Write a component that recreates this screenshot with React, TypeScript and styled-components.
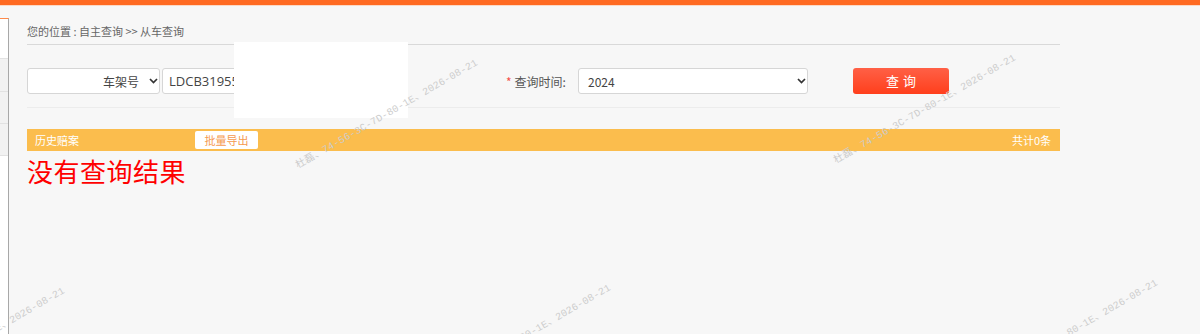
import React from "react";
import styled, { createGlobalStyle } from "styled-components";

const GlobalStyle = createGlobalStyle`
  html, body { margin: 0; padding: 0; }
  body {
    background: #f7f7f7;
    font-family: "Noto Sans CJK SC", "Noto Sans", sans-serif;
    overflow: hidden;
  }
`;

const Page = styled.div`
  position: relative;
  width: 1200px;
  height: 334px;
  overflow: hidden;
  background: #f7f7f7;
`;

const TopBar = styled.div`
  height: 5px;
  background: #ff6a22;
  border-bottom: 1px solid #fbd9c6;
`;

const Layout = styled.div`
  display: flex;
  padding-top: 12px;
  height: 316px;
`;

const Sidebar = styled.div`
  width: 8px;
  flex: none;
  background: #fff;
  border-top: 1px solid #ff8a4a;
  border-right: 1px solid #a8a8a8;
  display: flex;
  flex-direction: column;
`;

const SideItem = styled.div<{ $h: number; $shade?: boolean }>`
  height: ${(p) => p.$h}px;
  background: ${(p) => (p.$shade ? "#f2f2f2" : "#fff")};
  border-bottom: 1px solid #e2e2e2;
`;

const Main = styled.div`
  width: 1033px;
  padding-left: 18px;
  padding-top: 3px;
`;

const Breadcrumb = styled.div`
  font-size: 11px;
  line-height: 20px;
  color: #666;
  padding-bottom: 3px;
  border-bottom: 1px solid #d9d9d9;
`;

const FormRow = styled.div`
  display: flex;
  align-items: center;
  margin-top: 23px;
  padding-bottom: 13px;
  border-bottom: 1px solid #ececec;
`;

const SelectBox = styled.div<{ $w: number; $right?: boolean }>`
  box-sizing: border-box;
  width: ${(p) => p.$w}px;
  height: 26px;
  background: #fff;
  border: 1px solid #d6d6d6;
  border-radius: 3px;
  display: flex;
  align-items: center;
  justify-content: ${(p) => (p.$right ? "flex-end" : "space-between")};
  padding: 0 1px 0 9px;
  font-size: 12px;
  color: #444;
  gap: 10px;
`;

const TextInput = styled.div`
  box-sizing: border-box;
  width: 200px;
  height: 26px;
  margin-left: 2px;
  background: #fff;
  border: 1px solid #d6d6d6;
  border-radius: 3px;
  display: flex;
  align-items: center;
  padding-left: 6px;
  font-size: 13px;
  color: #444;
  font-family: "Open Sans", "Noto Sans", sans-serif;
`;

const Label = styled.div`
  margin-left: 144px;
  width: 72px;
  font-size: 12px;
  color: #555;
  display: flex;
  align-items: center;
`;

const Star = styled.span`
  color: #f5504a;
  margin-right: 3px;
  font-size: 12px;
`;

const SearchButton = styled.button`
  margin-left: 45px;
  width: 96px;
  height: 26px;
  border: none;
  border-radius: 3px;
  background: linear-gradient(#ff6046, #ff3f1c);
  color: #fff;
  font-family: "Noto Sans CJK SC", sans-serif;
  font-size: 13px;
  letter-spacing: 4px;
  padding: 0 0 0 4px;
  margin-top: -1px;
`;

const ResultBar = styled.div`
  margin-top: 21px;
  height: 22px;
  background: #fbbd4d;
  display: flex;
  align-items: center;
  padding: 0 9px 0 8px;
  font-size: 11px;
  color: #fff;
`;

const BarTitle = styled.span`
  width: 160px;
`;

const ExportButton = styled.span`
  width: 63px;
  height: 18px;
  background: #fff;
  border-radius: 2px;
  color: #f59a4f;
  font-size: 11px;
  display: flex;
  align-items: center;
  justify-content: center;
`;

const Total = styled.span`
  margin-left: auto;
`;

const NoResult = styled.div`
  font-size: 26px;
  line-height: 40px;
  color: #ff0000;
  letter-spacing: 0.5px;
`;

const Redaction = styled.div`
  position: absolute;
  left: 234px;
  top: 42px;
  width: 174px;
  height: 76px;
  background: #fff;
`;

const Watermark = styled.div<{ $x: number; $y: number }>`
  position: absolute;
  left: ${(p) => p.$x}px;
  top: ${(p) => p.$y - 12}px;
  height: 12px;
  line-height: 12px;
  white-space: nowrap;
  transform-origin: 0 100%;
  transform: rotate(-30deg);
  font-family: "Liberation Mono", "Noto Sans CJK SC", monospace;
  font-size: 10px;
  letter-spacing: 0.2px;
  color: #cccccc;
  pointer-events: none;
`;

const Chevron = () => (
  <svg width="9" height="6" viewBox="0 0 9 6">
    <path d="M1 1l3.5 3.5L8 1" fill="none" stroke="#333" strokeWidth="1.7" />
  </svg>
);

const marks = [
  { x: 300, y: 172 },
  { x: 838, y: 167 },
  { x: -113, y: 400 },
  { x: 433, y: 397 },
  { x: 980, y: 392 },
];

export default function App() {
  return (
    <Page>
      <GlobalStyle />
      <TopBar />
      <Layout>
        <Sidebar>
          <SideItem $h={39} />
          <SideItem $h={32} $shade />
          <SideItem $h={31} $shade />
          <SideItem $h={31} $shade />
        </Sidebar>
        <Main>
          <Breadcrumb>您的位置 : 自主查询 &gt;&gt; 从车查询</Breadcrumb>
          <FormRow>
            <SelectBox $w={133} $right>
              <span>车架号</span>
              <Chevron />
            </SelectBox>
            <TextInput>LDCB31955F</TextInput>
            <Label>
              <Star>*</Star>查询时间:
            </Label>
            <SelectBox $w={230}>
              <span>2024</span>
              <Chevron />
            </SelectBox>
            <SearchButton>查询</SearchButton>
          </FormRow>
          <ResultBar>
            <BarTitle>历史赔案</BarTitle>
            <ExportButton>批量导出</ExportButton>
            <Total>共计0条</Total>
          </ResultBar>
          <NoResult>没有查询结果</NoResult>
        </Main>
      </Layout>
      <Redaction />
      {marks.map((m, i) => (
        <Watermark key={i} $x={m.x} $y={m.y}>
          杜磊、74-56-3C-7D-80-1E、2026-08-21
        </Watermark>
      ))}
    </Page>
  );
}
